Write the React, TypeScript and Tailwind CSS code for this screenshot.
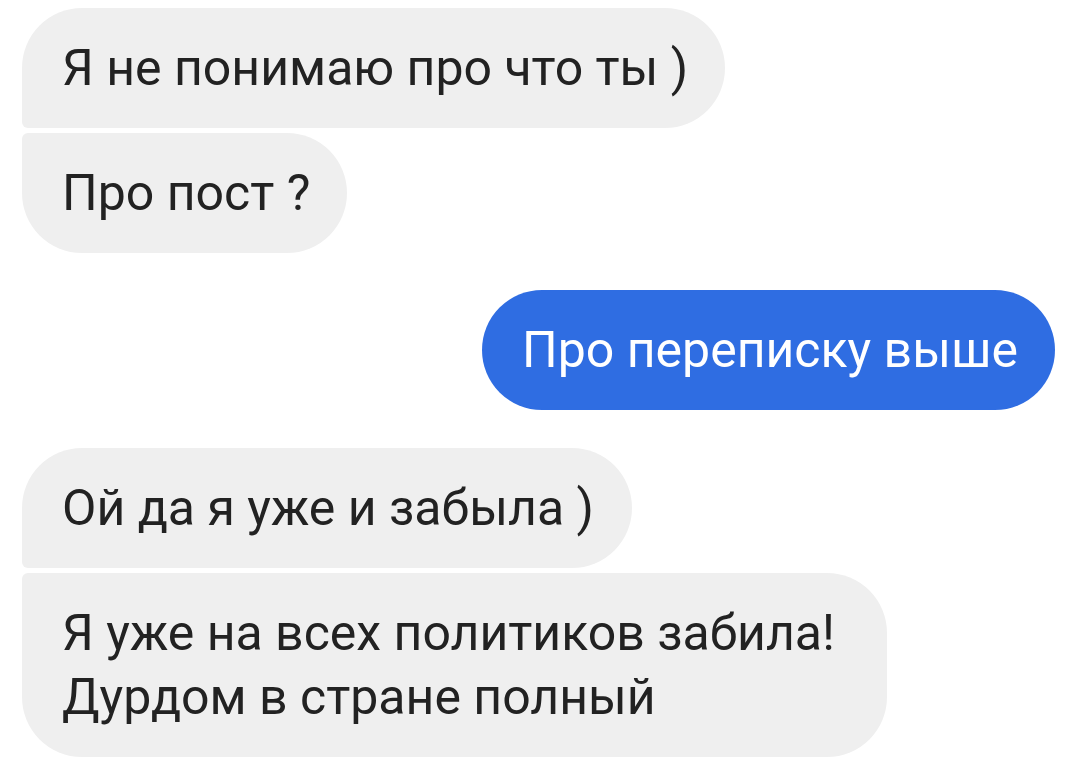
import React from 'react';

type Msg = { id: number; text: string[]; mine?: boolean; shape: string; gapTop: string; pr: string };

const messages: Msg[] = [
  { id: 1, text: ['Я не понимаю про что ты )'], shape: 'rounded-[60px] rounded-bl-[6px]', gapTop: 'mt-0', pr: 'pr-[37px]' },
  { id: 2, text: ['Про пост ?'], shape: 'rounded-[60px] rounded-tl-[6px]', gapTop: 'mt-[5px]', pr: 'pr-[37px]' },
  { id: 3, text: ['Про переписку выше'], mine: true, shape: 'rounded-[60px]', gapTop: 'mt-[37px]', pr: 'pr-[37px]' },
  { id: 4, text: ['Ой да я уже и забыла )'], shape: 'rounded-[60px] rounded-bl-[6px]', gapTop: 'mt-[38px]', pr: 'pr-[38px]' },
  {
    id: 5,
    text: ['Я уже на всех политиков забила!', 'Дурдом в стране полный'],
    shape: 'rounded-[60px] rounded-tl-[6px]',
    gapTop: 'mt-[5px]',
    pr: 'pr-[52px]',
  },
];

export default function App() {
  return (
    <div
      className="w-[1080px] h-[775px] bg-white overflow-hidden flex flex-col pl-[22px] pr-[25px] pt-[8px]"
      style={{ fontFamily: 'Roboto, "Noto Sans", sans-serif' }}
    >
      {messages.map((m) => (
        <div key={m.id} className={`flex ${m.mine ? 'justify-end' : 'justify-start'} ${m.gapTop}`}>
          <div
            className={`${m.shape} ${m.pr} pl-[40px] py-[28px] text-[50px] leading-[64px] ${
              m.mine ? 'bg-[#2f6de2] text-white' : 'bg-[#efefef] text-[#222222]'
            }`}
          >
            {m.text.map((line, i) => (
              <div key={i} className="whitespace-nowrap">
                {line}
              </div>
            ))}
          </div>
        </div>
      ))}
    </div>
  );
}
